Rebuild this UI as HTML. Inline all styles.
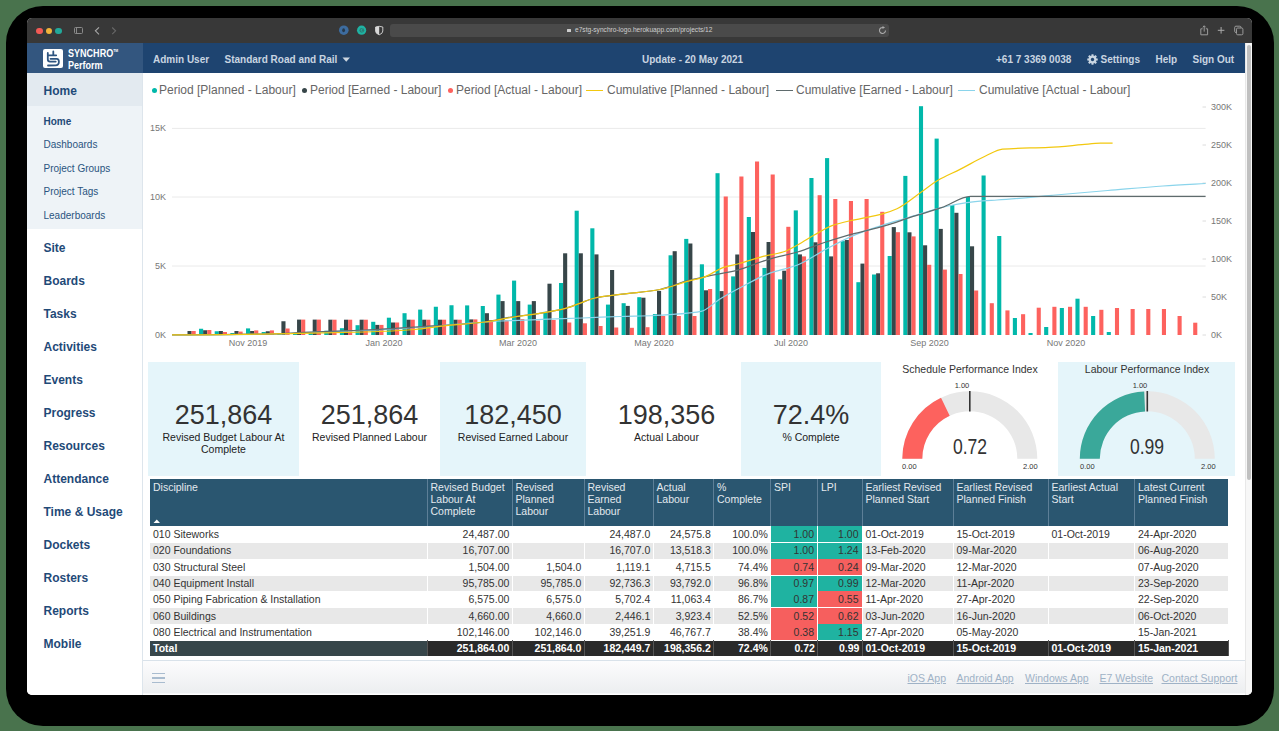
<!DOCTYPE html>
<html><head><meta charset="utf-8"><title>Synchro Perform</title>
<style>
*{box-sizing:border-box;margin:0;padding:0}
html,body{width:1279px;height:731px;overflow:hidden;background:#49734d;font-family:"Liberation Sans",sans-serif}
.abs{position:absolute}
#shadow{position:absolute;left:5.5px;top:5.6px;width:1268.2px;height:720.7px;background:#000;border-radius:37px}
#win{position:absolute;left:27px;top:18px;width:1225px;height:677px;border-radius:5px;overflow:hidden;background:#fff}
#pg{position:absolute;left:-27px;top:-18px;width:1279px;height:731px}
.t{position:absolute;white-space:nowrap;line-height:1}
/* toolbar */
#tb{position:absolute;left:27px;top:18px;width:1225px;height:25px;background:#383838}
#nav{position:absolute;left:27px;top:43px;width:1218px;height:30px;background:#1e4470}
#logo{position:absolute;left:27px;top:43px;width:116px;height:30px;background:#33567f}
.nt{color:#c9d5e1;font-weight:bold;font-size:10px}
#side{position:absolute;left:27px;top:73px;width:116px;height:622px;background:#fff;border-right:1px solid #dde5ec}
#sideHome{position:absolute;left:27px;top:73px;width:115px;height:33px;background:#e3eaf0}
#sideSub{position:absolute;left:27px;top:106px;width:115px;height:123px;background:#eef3f7}
.sm{color:#1f4a78;font-weight:bold;font-size:12px;margin-top:0.7px}
.ss{color:#2a5480;font-size:10px}
.lg{color:#666;font-size:12px}
.ax{color:#777;font-size:9px}
.card{position:absolute;top:362px;height:114px;background:#e5f5fa}
.kn{position:absolute;width:100%;text-align:center;font-size:27px;color:#333;line-height:1;margin-top:-2.7px}
.kl{position:absolute;width:100%;text-align:center;font-size:10.5px;color:#222;line-height:11.5px;margin-top:1px}
table{position:absolute;left:150px;top:479px;border-collapse:collapse;font-size:10.5px;color:#333}
th{background:#2a5670;color:#e3e9ee;font-weight:normal;text-align:left;vertical-align:top;padding:2px 3px 0 3px;height:47px;line-height:12px;border-right:1px solid #5d7f97;position:relative}
td{height:16.3px;padding:0 3px;line-height:16px;white-space:nowrap;border-right:1px solid #fff}
tr.g td{background:#e8e8e8;box-shadow:inset 0 1px 0 #fff}
td.n{text-align:right;padding-right:2.2px}
td.gr{background:#1fb3a1 !important;text-align:right;color:#333}
td.rd{background:#f65f5e !important;text-align:right;color:#333}
tr.tot td{background:#2a2a2a;color:#fff;font-weight:bold;border-right:1px solid #555;box-shadow:inset 0 1px 0 #fff;line-height:14.6px;padding-top:1.2px;height:15.8px}
tr.tot td.first{background:#37464a}
.ft{color:#9fb2c6;font-size:10.5px;text-decoration:underline}
</style></head><body>
<div id="shadow"></div>
<div id="win"><div id="pg">
<!-- toolbar -->
<div id="tb"></div>
<div class="abs" style="left:36px;top:27.5px;width:6.5px;height:6.5px;border-radius:50%;background:#f25a55"></div>
<div class="abs" style="left:45.7px;top:27.5px;width:6.5px;height:6.5px;border-radius:50%;background:#f3b43a"></div>
<div class="abs" style="left:55px;top:27.5px;width:6.5px;height:6.5px;border-radius:50%;background:#22a99a"></div>
<div class="abs" style="left:73.5px;top:26.7px;width:9px;height:7px;border:1px solid #8a8a8a;border-radius:1.5px"></div>
<div class="abs" style="left:76px;top:26.7px;width:1px;height:7px;background:#8a8a8a"></div>
<svg class="abs" style="left:90px;top:24px" width="30" height="14"><path d="M9 3.3 L5.4 6.8 L9 10.3" stroke="#a8a8a8" stroke-width="1.1" fill="none"/><path d="M22.2 3.5 L25.6 6.8 L22.2 10.1" stroke="#686868" stroke-width="1.1" fill="none"/></svg>


<svg class="abs" style="left:336px;top:23px" width="50" height="15"><circle cx="7.8" cy="7.2" r="4.8" fill="#3d6c9f"/><ellipse cx="7.6" cy="7.2" rx="1.4" ry="2" fill="#26384a"/><circle cx="25.6" cy="7.2" r="4.6" fill="#1fb3a3"/><circle cx="25.8" cy="7.3" r="2.4" fill="#2a7f77"/><path d="M26.5 5.8 L24.8 7.3 L26.5 8.8" stroke="#1fb3a3" stroke-width="1" fill="none"/><path d="M39.6 4 L43.2 3.3 L46.8 4 L46.8 8 Q46.8 10.6 43.2 11.8 Q39.6 10.6 39.6 8 Z" fill="#383838" stroke="#d8d8d8" stroke-width="0.9"/><path d="M39.6 4 L43.2 3.3 L43.2 11.8 Q39.6 10.6 39.6 8 Z" fill="#d8d8d8"/></svg>
<div class="abs" style="left:390px;top:24.4px;width:499px;height:12.5px;background:#4a4a4a;border-radius:3px"></div>
<div class="abs" style="left:566.5px;top:28.7px;width:4px;height:3.5px;background:#ccc;border-radius:0.5px"></div>
<div class="t" style="left:575px;top:27.4px;font-size:6.6px;color:#cfcfcf">e7stg-synchro-logo.herokuapp.com/projects/12</div>
<svg class="abs" style="left:878px;top:26px" width="10" height="9"><path d="M7.5 4.5 A3 3 0 1 1 5 1.5" stroke="#aaa" stroke-width="1.1" fill="none"/><path d="M4.5 0 L7 1.5 L4.5 3 Z" fill="#aaa"/></svg>
<svg class="abs" style="left:1198px;top:24px" width="50" height="14"><g stroke="#9a9a9a" stroke-width="1" fill="none"><path d="M4.6 4.8 L2.8 4.8 L2.8 10.8 L9.6 10.8 L9.6 4.8 L7.8 4.8"/><path d="M6.2 1.8 L6.2 7.6 M4.7 3.3 L6.2 1.8 L7.7 3.3"/><path d="M23.1 3 L23.1 9.6 M19.8 6.3 L26.4 6.3" stroke="#aaa"/><rect x="36.7" y="2.2" width="6.3" height="6.3" rx="1.2"/><rect x="38.5" y="4" width="6.4" height="6.8" rx="1.2" fill="#383838"/></g></svg>
<!-- nav -->
<div id="nav"></div>
<div id="logo"></div>
<div class="abs" style="left:43.4px;top:48.8px;width:19.5px;height:19.7px;background:#fff;border-radius:2px"></div>
<svg class="abs" style="left:43.4px;top:48.9px" width="20" height="20"><g stroke="#2f5580" stroke-width="1.8" fill="none" stroke-linecap="round"><path d="M4.8 4 L4.8 10.3 Q4.8 12.6 7 12.6 L12.7 12.6"/><path d="M7.5 9.8 L13.8 9.8 Q15.9 9.8 15.9 12.7 Q15.9 16.2 12.5 16.3 L5 16.5"/><path d="M10.3 2.4 L10.3 6.3 M4.8 6.3 L13.2 6.3"/></g></svg>
<div class="t" style="left:67.5px;top:48.2px;font-size:11.3px;font-weight:bold;color:#fff;transform:scaleX(0.8);transform-origin:0 0">SYNCHRO<span style="font-size:4.3px;vertical-align:top;position:relative;top:0.5px">TM</span></div>
<div class="t" style="left:67.5px;top:59.5px;font-size:11.3px;font-weight:bold;color:#fff;transform:scaleX(0.8);transform-origin:0 0">Perform</div>
<div class="t nt" style="left:153px;top:55px">Admin User</div>
<div class="t nt" style="left:224.5px;top:55px">Standard Road and Rail</div>
<svg class="abs" style="left:342px;top:57px" width="9" height="6"><path d="M0.5 0.5 L8 0.5 L4.25 4.8 Z" fill="#cdd6e0"/></svg>
<div class="t nt" style="left:642px;top:55px">Update - 20 May 2021</div>
<div class="t nt" style="left:996px;top:55px">+61 7 3369 0038</div>
<svg class="abs" style="left:1087px;top:53.9px" width="11" height="11" viewBox="0 0 12 12"><g fill="#c9d5e1"><circle cx="6" cy="6" r="4.3"/><rect x="4.9" y="0.3" width="2.2" height="11.4"/><rect x="0.3" y="4.9" width="11.4" height="2.2"/><rect x="4.9" y="0.3" width="2.2" height="11.4" transform="rotate(45 6 6)"/><rect x="4.9" y="0.3" width="2.2" height="11.4" transform="rotate(-45 6 6)"/></g><circle cx="6" cy="6" r="1.8" fill="#1e4470"/></svg>
<div class="t nt" style="left:1100.5px;top:55px">Settings</div>
<div class="t nt" style="left:1155.5px;top:55px">Help</div>
<div class="t nt" style="left:1192.5px;top:55px">Sign Out</div>
<!-- sidebar -->
<div id="side"></div>
<div id="sideHome"></div>
<div id="sideSub"></div>
<div class="t sm" style="left:43.5px;top:84.3px;font-size:12px">Home</div>
<div class="t ss" style="left:43.5px;top:117.2px;font-weight:bold;color:#1f4a78">Home</div>
<div class="t ss" style="left:43.5px;top:140.2px">Dashboards</div>
<div class="t ss" style="left:43.5px;top:163.8px">Project Groups</div>
<div class="t ss" style="left:43.5px;top:187.4px">Project Tags</div>
<div class="t ss" style="left:43.5px;top:211px">Leaderboards</div>
<div class="t sm" style="left:43.5px;top:241px">Site</div>
<div class="t sm" style="left:43.5px;top:274px">Boards</div>
<div class="t sm" style="left:43.5px;top:307px">Tasks</div>
<div class="t sm" style="left:43.5px;top:340px">Activities</div>
<div class="t sm" style="left:43.5px;top:373px">Events</div>
<div class="t sm" style="left:43.5px;top:406px">Progress</div>
<div class="t sm" style="left:43.5px;top:439px">Resources</div>
<div class="t sm" style="left:43.5px;top:472px">Attendance</div>
<div class="t sm" style="left:43.5px;top:505px">Time &amp; Usage</div>
<div class="t sm" style="left:43.5px;top:538px">Dockets</div>
<div class="t sm" style="left:43.5px;top:571px">Rosters</div>
<div class="t sm" style="left:43.5px;top:604px">Reports</div>
<div class="t sm" style="left:43.5px;top:637px">Mobile</div>
<!-- scrollbar -->
<div class="abs" style="left:1245px;top:43px;width:7px;height:652px;background:#f7f7f7;border-left:1px solid #e8e8e8"></div>
<div class="abs" style="left:1247px;top:45px;width:3.6px;height:435px;background:#c0c0c0;border-radius:2px"></div>
<!-- chart legend -->
<div class="abs" style="left:151.5px;top:87.5px;width:5px;height:5px;border-radius:50%;background:#01B8AA"></div>
<div class="t lg" style="left:159px;top:84px">Period [Planned - Labour]</div>
<div class="abs" style="left:301.5px;top:87.5px;width:5px;height:5px;border-radius:50%;background:#374649"></div>
<div class="t lg" style="left:310px;top:84px">Period [Earned - Labour]</div>
<div class="abs" style="left:447.5px;top:87.5px;width:5px;height:5px;border-radius:50%;background:#FD625E"></div>
<div class="t lg" style="left:456px;top:84px">Period [Actual - Labour]</div>
<div class="abs" style="left:586px;top:89.5px;width:17px;height:1.5px;background:#F2C80F"></div>
<div class="t lg" style="left:607px;top:84px">Cumulative [Planned - Labour]</div>
<div class="abs" style="left:776px;top:89.5px;width:17px;height:1.5px;background:#5F6B6D"></div>
<div class="t lg" style="left:796px;top:84px">Cumulative [Earned - Labour]</div>
<div class="abs" style="left:958px;top:89.5px;width:17px;height:1.5px;background:#8AD4EB"></div>
<div class="t lg" style="left:979px;top:84px">Cumulative [Actual - Labour]</div>
<svg width="1279" height="731" style="position:absolute;left:0;top:0"><line x1="172" y1="128.4" x2="1205.6" y2="128.4" stroke="#eaeaea" stroke-width="1"/><line x1="172" y1="197" x2="1205.6" y2="197" stroke="#eaeaea" stroke-width="1"/><line x1="172" y1="266" x2="1205.6" y2="266" stroke="#eaeaea" stroke-width="1"/><line x1="1202.5" y1="107" x2="1206" y2="107" stroke="#dcdcdc" stroke-width="1"/><line x1="1202.5" y1="145" x2="1206" y2="145" stroke="#dcdcdc" stroke-width="1"/><line x1="1202.5" y1="183" x2="1206" y2="183" stroke="#dcdcdc" stroke-width="1"/><line x1="1202.5" y1="221" x2="1206" y2="221" stroke="#dcdcdc" stroke-width="1"/><line x1="1202.5" y1="259" x2="1206" y2="259" stroke="#dcdcdc" stroke-width="1"/><line x1="1202.5" y1="297" x2="1206" y2="297" stroke="#dcdcdc" stroke-width="1"/><line x1="1202.5" y1="335" x2="1206" y2="335" stroke="#dcdcdc" stroke-width="1"/><rect x="187.50" y="331.00" width="4.1" height="4.00" fill="#374649"/><rect x="191.60" y="331.00" width="4.1" height="4.00" fill="#FD625E"/><rect x="199.05" y="328.75" width="4.1" height="6.25" fill="#01B8AA"/><rect x="203.15" y="330.25" width="4.1" height="4.75" fill="#374649"/><rect x="207.25" y="330.00" width="4.1" height="5.00" fill="#FD625E"/><rect x="214.70" y="331.25" width="4.1" height="3.75" fill="#01B8AA"/><rect x="218.80" y="331.00" width="4.1" height="4.00" fill="#374649"/><rect x="222.90" y="332.00" width="4.1" height="3.00" fill="#FD625E"/><rect x="230.35" y="333.00" width="4.1" height="2.00" fill="#01B8AA"/><rect x="234.45" y="331.00" width="4.1" height="4.00" fill="#374649"/><rect x="238.55" y="331.60" width="4.1" height="3.40" fill="#FD625E"/><rect x="246.00" y="328.40" width="4.1" height="6.60" fill="#01B8AA"/><rect x="250.10" y="331.00" width="4.1" height="4.00" fill="#374649"/><rect x="254.20" y="330.40" width="4.1" height="4.60" fill="#FD625E"/><rect x="261.65" y="332.00" width="4.1" height="3.00" fill="#01B8AA"/><rect x="265.75" y="331.25" width="4.1" height="3.75" fill="#374649"/><rect x="269.85" y="330.40" width="4.1" height="4.60" fill="#FD625E"/><rect x="277.30" y="333.00" width="4.1" height="2.00" fill="#01B8AA"/><rect x="281.40" y="321.25" width="4.1" height="13.75" fill="#374649"/><rect x="285.50" y="328.50" width="4.1" height="6.50" fill="#FD625E"/><rect x="292.95" y="333.75" width="4.1" height="1.25" fill="#01B8AA"/><rect x="297.05" y="319.60" width="4.1" height="15.40" fill="#374649"/><rect x="301.15" y="319.60" width="4.1" height="15.40" fill="#FD625E"/><rect x="308.60" y="333.00" width="4.1" height="2.00" fill="#01B8AA"/><rect x="312.70" y="319.60" width="4.1" height="15.40" fill="#374649"/><rect x="316.80" y="319.60" width="4.1" height="15.40" fill="#FD625E"/><rect x="324.25" y="330.70" width="4.1" height="4.30" fill="#01B8AA"/><rect x="328.35" y="319.70" width="4.1" height="15.30" fill="#374649"/><rect x="332.45" y="319.70" width="4.1" height="15.30" fill="#FD625E"/><rect x="339.90" y="328.20" width="4.1" height="6.80" fill="#01B8AA"/><rect x="344.00" y="319.70" width="4.1" height="15.30" fill="#374649"/><rect x="348.10" y="319.70" width="4.1" height="15.30" fill="#FD625E"/><rect x="355.55" y="325.20" width="4.1" height="9.80" fill="#01B8AA"/><rect x="359.65" y="319.70" width="4.1" height="15.30" fill="#374649"/><rect x="363.75" y="319.70" width="4.1" height="15.30" fill="#FD625E"/><rect x="371.20" y="321.80" width="4.1" height="13.20" fill="#01B8AA"/><rect x="375.30" y="324.90" width="4.1" height="10.10" fill="#374649"/><rect x="379.40" y="324.90" width="4.1" height="10.10" fill="#FD625E"/><rect x="386.85" y="317.70" width="4.1" height="17.30" fill="#01B8AA"/><rect x="390.95" y="322.50" width="4.1" height="12.50" fill="#374649"/><rect x="395.05" y="322.50" width="4.1" height="12.50" fill="#FD625E"/><rect x="402.50" y="313.20" width="4.1" height="21.80" fill="#01B8AA"/><rect x="406.60" y="319.70" width="4.1" height="15.30" fill="#374649"/><rect x="410.70" y="319.70" width="4.1" height="15.30" fill="#FD625E"/><rect x="418.15" y="309.60" width="4.1" height="25.40" fill="#01B8AA"/><rect x="422.25" y="319.70" width="4.1" height="15.30" fill="#374649"/><rect x="426.35" y="319.70" width="4.1" height="15.30" fill="#FD625E"/><rect x="433.80" y="306.75" width="4.1" height="28.25" fill="#01B8AA"/><rect x="437.90" y="319.70" width="4.1" height="15.30" fill="#374649"/><rect x="442.00" y="319.70" width="4.1" height="15.30" fill="#FD625E"/><rect x="449.45" y="305.25" width="4.1" height="29.75" fill="#01B8AA"/><rect x="453.55" y="319.70" width="4.1" height="15.30" fill="#374649"/><rect x="457.65" y="319.70" width="4.1" height="15.30" fill="#FD625E"/><rect x="465.10" y="305.40" width="4.1" height="29.60" fill="#01B8AA"/><rect x="469.20" y="319.40" width="4.1" height="15.60" fill="#374649"/><rect x="473.30" y="319.40" width="4.1" height="15.60" fill="#FD625E"/><rect x="480.75" y="306.00" width="4.1" height="29.00" fill="#01B8AA"/><rect x="484.85" y="313.20" width="4.1" height="21.80" fill="#374649"/><rect x="488.95" y="320.00" width="4.1" height="15.00" fill="#FD625E"/><rect x="496.40" y="294.60" width="4.1" height="40.40" fill="#01B8AA"/><rect x="500.50" y="301.10" width="4.1" height="33.90" fill="#374649"/><rect x="504.60" y="320.00" width="4.1" height="15.00" fill="#FD625E"/><rect x="512.05" y="280.60" width="4.1" height="54.40" fill="#01B8AA"/><rect x="516.15" y="301.10" width="4.1" height="33.90" fill="#374649"/><rect x="520.25" y="319.00" width="4.1" height="16.00" fill="#FD625E"/><rect x="527.70" y="304.60" width="4.1" height="30.40" fill="#01B8AA"/><rect x="531.80" y="301.10" width="4.1" height="33.90" fill="#374649"/><rect x="535.90" y="320.60" width="4.1" height="14.40" fill="#FD625E"/><rect x="543.35" y="311.80" width="4.1" height="23.20" fill="#01B8AA"/><rect x="547.45" y="283.70" width="4.1" height="51.30" fill="#374649"/><rect x="551.55" y="320.00" width="4.1" height="15.00" fill="#FD625E"/><rect x="559.00" y="283.00" width="4.1" height="52.00" fill="#01B8AA"/><rect x="563.10" y="253.30" width="4.1" height="81.70" fill="#374649"/><rect x="567.20" y="322.50" width="4.1" height="12.50" fill="#FD625E"/><rect x="574.65" y="210.70" width="4.1" height="124.30" fill="#01B8AA"/><rect x="578.75" y="253.30" width="4.1" height="81.70" fill="#374649"/><rect x="582.85" y="323.30" width="4.1" height="11.70" fill="#FD625E"/><rect x="590.30" y="228.30" width="4.1" height="106.70" fill="#01B8AA"/><rect x="594.40" y="254.40" width="4.1" height="80.60" fill="#374649"/><rect x="598.50" y="326.00" width="4.1" height="9.00" fill="#FD625E"/><rect x="605.95" y="304.60" width="4.1" height="30.40" fill="#01B8AA"/><rect x="610.05" y="270.00" width="4.1" height="65.00" fill="#374649"/><rect x="614.15" y="327.50" width="4.1" height="7.50" fill="#FD625E"/><rect x="621.60" y="303.20" width="4.1" height="31.80" fill="#01B8AA"/><rect x="625.70" y="305.90" width="4.1" height="29.10" fill="#374649"/><rect x="629.80" y="327.80" width="4.1" height="7.20" fill="#FD625E"/><rect x="637.25" y="297.20" width="4.1" height="37.80" fill="#01B8AA"/><rect x="641.35" y="297.70" width="4.1" height="37.30" fill="#374649"/><rect x="645.45" y="327.20" width="4.1" height="7.80" fill="#FD625E"/><rect x="652.90" y="314.10" width="4.1" height="20.90" fill="#01B8AA"/><rect x="657.00" y="290.90" width="4.1" height="44.10" fill="#374649"/><rect x="661.10" y="316.00" width="4.1" height="19.00" fill="#FD625E"/><rect x="668.55" y="255.30" width="4.1" height="79.70" fill="#01B8AA"/><rect x="672.65" y="251.20" width="4.1" height="83.80" fill="#374649"/><rect x="676.75" y="316.00" width="4.1" height="19.00" fill="#FD625E"/><rect x="684.20" y="238.90" width="4.1" height="96.10" fill="#01B8AA"/><rect x="688.30" y="243.50" width="4.1" height="91.50" fill="#374649"/><rect x="692.40" y="316.00" width="4.1" height="19.00" fill="#FD625E"/><rect x="699.85" y="264.30" width="4.1" height="70.70" fill="#01B8AA"/><rect x="703.95" y="290.30" width="4.1" height="44.70" fill="#374649"/><rect x="708.05" y="289.00" width="4.1" height="46.00" fill="#FD625E"/><rect x="715.50" y="173.20" width="4.1" height="161.80" fill="#01B8AA"/><rect x="719.60" y="291.10" width="4.1" height="43.90" fill="#374649"/><rect x="723.70" y="196.50" width="4.1" height="138.50" fill="#FD625E"/><rect x="731.15" y="276.40" width="4.1" height="58.60" fill="#01B8AA"/><rect x="735.25" y="254.50" width="4.1" height="80.50" fill="#374649"/><rect x="739.35" y="176.50" width="4.1" height="158.50" fill="#FD625E"/><rect x="746.80" y="217.00" width="4.1" height="118.00" fill="#01B8AA"/><rect x="750.90" y="232.00" width="4.1" height="103.00" fill="#374649"/><rect x="755.00" y="161.50" width="4.1" height="173.50" fill="#FD625E"/><rect x="762.45" y="267.90" width="4.1" height="67.10" fill="#01B8AA"/><rect x="766.55" y="242.00" width="4.1" height="93.00" fill="#374649"/><rect x="770.65" y="174.50" width="4.1" height="160.50" fill="#FD625E"/><rect x="778.10" y="279.40" width="4.1" height="55.60" fill="#01B8AA"/><rect x="782.20" y="270.70" width="4.1" height="64.30" fill="#374649"/><rect x="786.30" y="226.80" width="4.1" height="108.20" fill="#FD625E"/><rect x="793.75" y="210.40" width="4.1" height="124.60" fill="#01B8AA"/><rect x="797.85" y="254.40" width="4.1" height="80.60" fill="#374649"/><rect x="801.95" y="256.40" width="4.1" height="78.60" fill="#FD625E"/><rect x="809.40" y="178.00" width="4.1" height="157.00" fill="#01B8AA"/><rect x="813.50" y="242.30" width="4.1" height="92.70" fill="#374649"/><rect x="817.60" y="195.20" width="4.1" height="139.80" fill="#FD625E"/><rect x="825.05" y="158.10" width="4.1" height="176.90" fill="#01B8AA"/><rect x="829.15" y="256.40" width="4.1" height="78.60" fill="#374649"/><rect x="833.25" y="199.00" width="4.1" height="136.00" fill="#FD625E"/><rect x="840.70" y="241.10" width="4.1" height="93.90" fill="#01B8AA"/><rect x="844.80" y="240.00" width="4.1" height="95.00" fill="#374649"/><rect x="848.90" y="201.00" width="4.1" height="134.00" fill="#FD625E"/><rect x="856.35" y="282.20" width="4.1" height="52.80" fill="#01B8AA"/><rect x="860.45" y="263.60" width="4.1" height="71.40" fill="#374649"/><rect x="864.55" y="199.00" width="4.1" height="136.00" fill="#FD625E"/><rect x="872.00" y="274.50" width="4.1" height="60.50" fill="#01B8AA"/><rect x="876.10" y="273.30" width="4.1" height="61.70" fill="#374649"/><rect x="880.20" y="211.80" width="4.1" height="123.20" fill="#FD625E"/><rect x="887.65" y="256.00" width="4.1" height="79.00" fill="#01B8AA"/><rect x="891.75" y="227.10" width="4.1" height="107.90" fill="#374649"/><rect x="895.85" y="232.20" width="4.1" height="102.80" fill="#FD625E"/><rect x="903.30" y="175.90" width="4.1" height="159.10" fill="#01B8AA"/><rect x="907.40" y="232.30" width="4.1" height="102.70" fill="#374649"/><rect x="911.50" y="236.40" width="4.1" height="98.60" fill="#FD625E"/><rect x="918.95" y="106.20" width="4.1" height="228.80" fill="#01B8AA"/><rect x="923.05" y="245.30" width="4.1" height="89.70" fill="#374649"/><rect x="927.15" y="264.80" width="4.1" height="70.20" fill="#FD625E"/><rect x="934.60" y="138.60" width="4.1" height="196.40" fill="#01B8AA"/><rect x="938.70" y="228.90" width="4.1" height="106.10" fill="#374649"/><rect x="942.80" y="269.60" width="4.1" height="65.40" fill="#FD625E"/><rect x="950.25" y="205.00" width="4.1" height="130.00" fill="#01B8AA"/><rect x="954.35" y="212.80" width="4.1" height="122.20" fill="#374649"/><rect x="958.45" y="274.00" width="4.1" height="61.00" fill="#FD625E"/><rect x="965.90" y="196.90" width="4.1" height="138.10" fill="#01B8AA"/><rect x="970.00" y="246.30" width="4.1" height="88.70" fill="#374649"/><rect x="974.10" y="290.50" width="4.1" height="44.50" fill="#FD625E"/><rect x="981.55" y="175.50" width="4.1" height="159.50" fill="#01B8AA"/><rect x="989.75" y="303.20" width="4.1" height="31.80" fill="#FD625E"/><rect x="997.20" y="236.00" width="4.1" height="99.00" fill="#01B8AA"/><rect x="1005.40" y="310.40" width="4.1" height="24.60" fill="#FD625E"/><rect x="1012.85" y="318.00" width="4.1" height="17.00" fill="#01B8AA"/><rect x="1021.05" y="314.20" width="4.1" height="20.80" fill="#FD625E"/><rect x="1028.50" y="333.00" width="4.1" height="2.00" fill="#01B8AA"/><rect x="1036.70" y="307.70" width="4.1" height="27.30" fill="#FD625E"/><rect x="1044.15" y="327.00" width="4.1" height="8.00" fill="#01B8AA"/><rect x="1052.35" y="306.80" width="4.1" height="28.20" fill="#FD625E"/><rect x="1059.80" y="308.00" width="4.1" height="27.00" fill="#01B8AA"/><rect x="1068.00" y="306.80" width="4.1" height="28.20" fill="#FD625E"/><rect x="1075.45" y="298.70" width="4.1" height="36.30" fill="#01B8AA"/><rect x="1083.65" y="306.80" width="4.1" height="28.20" fill="#FD625E"/><rect x="1091.10" y="316.00" width="4.1" height="19.00" fill="#01B8AA"/><rect x="1099.30" y="309.80" width="4.1" height="25.20" fill="#FD625E"/><rect x="1106.75" y="332.00" width="4.1" height="3.00" fill="#01B8AA"/><rect x="1114.95" y="308.00" width="4.1" height="27.00" fill="#FD625E"/><rect x="1130.60" y="309.00" width="4.1" height="26.00" fill="#FD625E"/><rect x="1146.25" y="309.00" width="4.1" height="26.00" fill="#FD625E"/><rect x="1161.90" y="309.00" width="4.1" height="26.00" fill="#FD625E"/><rect x="1177.55" y="316.00" width="4.1" height="19.00" fill="#FD625E"/><rect x="1193.20" y="322.70" width="4.1" height="12.30" fill="#FD625E"/><path d="M172.0,334.8 C177.3,334.8 182.7,334.8 188.0,334.8 C217.7,334.8 247.3,334.5 277.0,334.0 C289.7,333.8 302.3,332.7 315.0,332.2 C331.7,331.5 348.3,331.2 365.0,330.5 C381.7,329.8 398.3,328.6 415.0,327.5 C430.0,326.5 445.0,325.1 460.0,324.0 C473.7,323.0 487.3,321.7 501.0,321.0 C514.7,320.3 528.3,319.9 542.0,319.4 C555.7,318.9 569.3,318.5 583.0,318.0 C595.3,317.5 607.7,316.9 620.0,316.5 C631.6,316.1 643.1,316.0 654.7,315.5 C670.1,314.8 685.6,314.1 701.0,311.4 C707.3,310.3 713.7,302.8 720.0,299.0 C727.3,294.6 734.7,290.6 742.0,286.8 C750.9,282.1 759.8,276.9 768.7,273.6 C778.3,270.0 787.9,268.7 797.5,265.0 C807.0,261.3 816.5,254.2 826.0,249.2 C835.7,244.1 845.3,238.8 855.0,234.8 C864.6,230.9 874.1,227.8 883.7,224.8 C891.5,222.3 899.2,220.3 907.0,218.0 C920.7,214.0 934.3,208.7 948.0,206.0 C959.5,203.7 971.1,201.7 982.6,200.8 C987.4,200.4 992.2,200.3 997.0,200.0 C1015.3,198.8 1033.7,196.9 1052.0,195.3 C1070.6,193.7 1089.2,192.1 1107.8,190.5 C1126.2,189.0 1144.6,187.2 1163.0,186.0 C1177.2,185.0 1191.4,184.3 1205.6,183.5" fill="none" stroke="#8AD4EB" stroke-width="1.25"/><path d="M172.0,334.8 C177.3,334.8 182.7,334.8 188.0,334.8 C217.7,334.8 247.3,334.4 277.0,333.8 C289.7,333.5 302.3,332.3 315.0,331.8 C331.7,331.1 348.3,330.8 365.0,330.0 C381.7,329.2 398.3,328.1 415.0,327.0 C438.3,325.5 461.7,324.7 485.0,322.0 C488.7,321.6 492.3,320.7 496.0,320.0 C501.0,319.0 506.0,317.8 511.0,317.0 C516.6,316.2 522.1,315.7 527.7,315.0 C533.8,314.2 539.9,313.4 546.0,312.4 C552.2,311.4 558.4,310.3 564.6,308.7 C569.4,307.5 574.2,305.3 579.0,303.6 C584.5,301.7 589.9,299.2 595.4,298.0 C600.9,296.8 606.3,296.1 611.8,295.4 C616.9,294.7 621.9,294.2 627.0,293.6 C638.0,292.3 649.0,291.5 660.0,289.5 C669.2,287.8 678.3,283.1 687.5,280.7 C694.7,278.8 701.8,277.3 709.0,275.8 C718.3,273.8 727.5,272.6 736.8,270.3 C747.4,267.6 758.1,262.4 768.7,259.3 C778.3,256.5 787.9,254.8 797.5,252.0 C807.0,249.2 816.5,245.1 826.0,242.0 C835.7,238.9 845.3,236.0 855.0,233.4 C864.6,230.8 874.1,228.9 883.7,226.2 C893.8,223.3 903.9,219.4 914.0,216.2 C923.2,213.3 932.3,210.9 941.5,207.7 C951.2,204.4 960.9,196.4 970.6,196.4 C1048.9,196.4 1127.3,196.4 1205.6,196.4" fill="none" stroke="#5F6B6D" stroke-width="1.25"/><path d="M172.0,334.8 C177.3,334.8 182.7,334.8 188.0,334.8 C226.0,334.8 264.0,333.9 302.0,333.3 C323.0,333.0 344.0,332.6 365.0,332.0 C381.7,331.5 398.3,330.8 415.0,329.5 C423.3,328.9 431.7,327.2 440.0,326.3 C455.0,324.6 470.0,323.9 485.0,322.0 C493.7,320.9 502.3,318.9 511.0,317.5 C522.7,315.6 534.3,314.4 546.0,312.4 C552.2,311.3 558.4,310.3 564.6,308.7 C569.4,307.5 574.2,305.3 579.0,303.6 C584.3,301.7 589.7,299.1 595.0,298.0 C600.7,296.8 606.3,296.2 612.0,295.4 C617.0,294.7 622.0,294.2 627.0,293.6 C638.0,292.3 649.0,291.5 660.0,289.5 C669.2,287.9 678.3,283.8 687.5,281.3 C693.0,279.8 698.5,279.0 704.0,277.2 C710.3,275.1 716.7,269.7 723.0,267.6 C728.5,265.8 734.0,265.0 739.5,263.5 C747.3,261.4 755.2,258.4 763.0,256.4 C769.7,254.7 776.3,254.1 783.0,252.0 C787.8,250.5 792.7,247.6 797.5,245.0 C803.2,242.0 809.0,238.0 814.7,234.8 C820.5,231.6 826.2,227.7 832.0,225.6 C837.7,223.6 843.3,222.3 849.0,221.0 C854.7,219.7 860.3,218.8 866.0,217.6 C872.0,216.3 878.0,215.0 884.0,213.3 C888.3,212.1 892.7,210.7 897.0,208.7 C905.0,205.1 913.0,197.9 921.0,192.3 C926.7,188.4 932.3,183.6 938.0,180.3 C945.3,176.0 952.7,173.1 960.0,169.4 C968.7,165.0 977.3,159.7 986.0,155.8 C991.5,153.3 997.0,149.5 1002.5,149.1 C1017.9,147.8 1033.3,148.1 1048.7,147.3 C1059.8,146.7 1070.9,145.6 1082.0,144.7 C1088.1,144.2 1094.3,143.2 1100.4,143.2 C1104.5,143.2 1108.5,143.2 1112.6,143.2" fill="none" stroke="#F2C80F" stroke-width="1.25"/></svg>
<div class="t ax" style="left:150px;top:124px;width:16px;text-align:right">15K</div>
<div class="t ax" style="left:150px;top:193px;width:16px;text-align:right">10K</div>
<div class="t ax" style="left:150px;top:262px;width:16px;text-align:right">5K</div>
<div class="t ax" style="left:150px;top:331px;width:16px;text-align:right">0K</div>
<div class="t ax" style="left:1211px;top:103px">300K</div>
<div class="t ax" style="left:1211px;top:141px">250K</div>
<div class="t ax" style="left:1211px;top:179px">200K</div>
<div class="t ax" style="left:1211px;top:217px">150K</div>
<div class="t ax" style="left:1211px;top:255px">100K</div>
<div class="t ax" style="left:1211px;top:293px">50K</div>
<div class="t ax" style="left:1211px;top:331px">0K</div>
<div class="t ax" style="left:208px;top:339px;width:80px;text-align:center">Nov 2019</div>
<div class="t ax" style="left:344px;top:339px;width:80px;text-align:center">Jan 2020</div>
<div class="t ax" style="left:478px;top:339px;width:80px;text-align:center">Mar 2020</div>
<div class="t ax" style="left:614px;top:339px;width:80px;text-align:center">May 2020</div>
<div class="t ax" style="left:751px;top:339px;width:80px;text-align:center">Jul 2020</div>
<div class="t ax" style="left:889.5px;top:339px;width:80px;text-align:center">Sep 2020</div>
<div class="t ax" style="left:1026px;top:339px;width:80px;text-align:center">Nov 2020</div>
<!-- KPI cards -->
<div class="card" style="left:148px;width:151px"><div class="kn" style="top:43px">251,864</div><div class="kl" style="top:69px">Revised Budget Labour At<br>Complete</div></div>
<div class="card" style="left:299px;width:141px;background:#fff"><div class="kn" style="top:43px">251,864</div><div class="kl" style="top:69px">Revised Planned Labour</div></div>
<div class="card" style="left:440px;width:146px"><div class="kn" style="top:43px">182,450</div><div class="kl" style="top:69px">Revised Earned Labour</div></div>
<div class="card" style="left:589px;width:155px;background:#fff"><div class="kn" style="top:43px">198,356</div><div class="kl" style="top:69px">Actual Labour</div></div>
<div class="card" style="left:741px;width:140px"><div class="kn" style="top:43px">72.4%</div><div class="kl" style="top:69px">% Complete</div></div>
<div class="card" style="left:1058px;width:177px"></div>
<!-- gauges -->
<div class="t" style="left:885px;top:363.5px;width:170px;text-align:center;font-size:10.5px;color:#333">Schedule Performance Index</div>
<div class="t" style="left:1062px;top:363.5px;width:170px;text-align:center;font-size:10.5px;color:#333">Labour Performance Index</div>
<svg class="abs" style="left:0;top:0" width="1279" height="731">
<path d="M902.3 458.8 A67.5 67.5 0 0 1 1037.3 458.8 L1017.3 458.8 A47.5 47.5 0 0 0 922.3 458.8 Z" fill="#e8e8e8"/>
<path d="M902.3 458.8 A67.5 67.5 0 0 1 941 397.7 L949.7 415.8 A47.5 47.5 0 0 0 922.3 458.8 Z" fill="#FD625E"/>
<line x1="969.8" y1="391" x2="969.8" y2="411.5" stroke="#333" stroke-width="1.6"/>
<path d="M1079.8 458.8 A67.5 67.5 0 0 1 1214.8 458.8 L1194.8 458.8 A47.5 47.5 0 0 0 1099.8 458.8 Z" fill="#e8e8e8"/>
<path d="M1079.8 458.8 A67.5 67.5 0 0 1 1144.2 391.4 L1145.1 411.4 A47.5 47.5 0 0 0 1099.8 458.8 Z" fill="#3aa89a"/>
<line x1="1147.3" y1="391" x2="1147.3" y2="411.5" stroke="#333" stroke-width="1.6"/>
</svg>
<div class="t" style="left:937px;top:382px;width:50px;text-align:center;font-size:7.5px;color:#333">1.00</div>
<div class="t" style="left:1115px;top:382px;width:50px;text-align:center;font-size:7.5px;color:#333">1.00</div>
<div class="t" style="left:902px;top:462.5px;font-size:7.5px;color:#333">0.00</div>
<div class="t" style="left:1023px;top:462.5px;font-size:7.5px;color:#333">2.00</div>
<div class="t" style="left:1080px;top:462.5px;font-size:7.5px;color:#333">0.00</div>
<div class="t" style="left:1201px;top:462.5px;font-size:7.5px;color:#333">2.00</div>
<div class="t" style="left:920px;top:436px;width:100px;text-align:center;font-size:22.5px;color:#333;transform:scaleX(0.78)">0.72</div>
<div class="t" style="left:1097px;top:436px;width:100px;text-align:center;font-size:22.5px;color:#333;transform:scaleX(0.78)">0.99</div>
<!-- table -->
<table>
<colgroup><col style="width:277px"><col style="width:85px"><col style="width:72px"><col style="width:69px"><col style="width:60.5px"><col style="width:57px"><col style="width:47px"><col style="width:44.5px"><col style="width:91px"><col style="width:95px"><col style="width:86.5px"><col style="width:93.5px"></colgroup>
<tr><th>Discipline<svg style="position:absolute;left:3px;top:40px" width="8" height="5"><path d="M0.5 4 L3.8 0.5 L7 4 Z" fill="#fff"/></svg></th><th>Revised Budget Labour At Complete</th><th>Revised Planned Labour</th><th>Revised Earned Labour</th><th>Actual Labour</th><th>% Complete</th><th>SPI</th><th>LPI</th><th>Earliest Revised Planned Start</th><th>Earliest Revised Planned Finish</th><th>Earliest Actual Start</th><th style="border-right:none">Latest Current Planned Finish</th></tr>
<tr><td>010 Siteworks</td><td class="n">24,487.00</td><td class="n"></td><td class="n">24,487.0</td><td class="n">24,575.8</td><td class="n">100.0%</td><td class="gr">1.00</td><td class="gr">1.00</td><td>01-Oct-2019</td><td>15-Oct-2019</td><td>01-Oct-2019</td><td>24-Apr-2020</td></tr>
<tr class="g"><td>020 Foundations</td><td class="n">16,707.00</td><td class="n"></td><td class="n">16,707.0</td><td class="n">13,518.3</td><td class="n">100.0%</td><td class="gr">1.00</td><td class="gr">1.24</td><td>13-Feb-2020</td><td>09-Mar-2020</td><td></td><td>06-Aug-2020</td></tr>
<tr><td>030 Structural Steel</td><td class="n">1,504.00</td><td class="n">1,504.0</td><td class="n">1,119.1</td><td class="n">4,715.5</td><td class="n">74.4%</td><td class="rd">0.74</td><td class="rd">0.24</td><td>09-Mar-2020</td><td>12-Mar-2020</td><td></td><td>07-Aug-2020</td></tr>
<tr class="g"><td>040 Equipment Install</td><td class="n">95,785.00</td><td class="n">95,785.0</td><td class="n">92,736.3</td><td class="n">93,792.0</td><td class="n">96.8%</td><td class="gr">0.97</td><td class="gr">0.99</td><td>12-Mar-2020</td><td>11-Apr-2020</td><td></td><td>23-Sep-2020</td></tr>
<tr><td>050 Piping Fabrication &amp; Installation</td><td class="n">6,575.00</td><td class="n">6,575.0</td><td class="n">5,702.4</td><td class="n">11,063.4</td><td class="n">86.7%</td><td class="gr">0.87</td><td class="rd">0.55</td><td>11-Apr-2020</td><td>27-Apr-2020</td><td></td><td>22-Sep-2020</td></tr>
<tr class="g"><td>060 Buildings</td><td class="n">4,660.00</td><td class="n">4,660.0</td><td class="n">2,446.1</td><td class="n">3,923.4</td><td class="n">52.5%</td><td class="rd">0.52</td><td class="rd">0.62</td><td>03-Jun-2020</td><td>16-Jun-2020</td><td></td><td>06-Oct-2020</td></tr>
<tr><td>080 Electrical and Instrumentation</td><td class="n">102,146.00</td><td class="n">102,146.0</td><td class="n">39,251.9</td><td class="n">46,767.7</td><td class="n">38.4%</td><td class="rd">0.38</td><td class="gr">1.15</td><td>27-Apr-2020</td><td>05-May-2020</td><td></td><td>15-Jan-2021</td></tr>
<tr class="tot"><td class="first">Total</td><td class="n">251,864.00</td><td class="n">251,864.0</td><td class="n">182,449.7</td><td class="n">198,356.2</td><td class="n">72.4%</td><td class="n">0.72</td><td class="n">0.99</td><td>01-Oct-2019</td><td>15-Oct-2019</td><td>01-Oct-2019</td><td>15-Jan-2021</td></tr>
</table>
<!-- footer -->
<div class="abs" style="left:143px;top:660px;width:1102px;height:35px;background:linear-gradient(#fcfcfd,#eceef0 95%,#fff 96%);border-top:1px solid #d9e2ea"></div>
<div class="abs" style="left:152px;top:672.8px;width:13px;height:1.4px;background:#a9bccf"></div>
<div class="abs" style="left:152px;top:677.2px;width:13px;height:1.4px;background:#a9bccf"></div>
<div class="abs" style="left:152px;top:681.6px;width:13px;height:1.4px;background:#a9bccf"></div>
<div class="t ft" style="left:907.5px;top:672.5px">iOS App</div>
<div class="t ft" style="left:956.5px;top:672.5px">Android App</div>
<div class="t ft" style="left:1025px;top:672.5px">Windows App</div>
<div class="t ft" style="left:1099.5px;top:672.5px">E7 Website</div>
<div class="t ft" style="left:1161.5px;top:672.5px">Contact Support</div>
</div></div>
</body></html>
